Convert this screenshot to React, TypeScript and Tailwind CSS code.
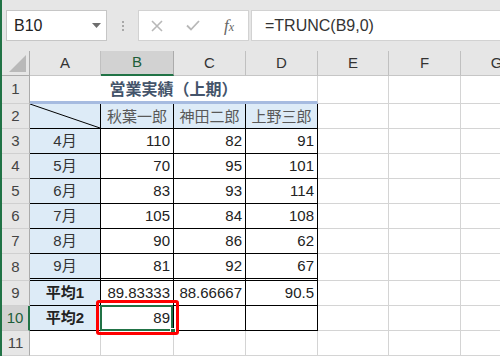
import React from "react";

const W = ["w-[71px]", "w-[73px]", "w-[72px]", "w-[72px]", "w-[71px]", "w-[72px]", "w-[72px]"];
const LETTERS = ["A", "B", "C", "D", "E", "F", "G"];

const FONT = "font-['Liberation_Sans','Noto_Sans_CJK_JP',sans-serif]";

function RowHdr({ n, sel }: { n: number; sel?: boolean }) {
  return (
    <div
      className={
        sel
          ? "w-[28px] shrink-0 flex items-center justify-center bg-[#d2d2d2] border-b border-b-[#c8c8c8] border-r-2 border-r-[#217346] text-[#1d5e3a] text-[15px]"
          : "w-[28px] shrink-0 flex items-center justify-center bg-[#e6e6e6] border-b border-b-[#d0d0d0] border-r border-r-[#ababab] text-[#444] text-[15px]"
      }
    >
      {n}
    </div>
  );
}

function GridCells({ from }: { from: number }) {
  return (
    <>
      {W.slice(from).map((w, i) => (
        <div key={i} className={`${w} shrink-0 border-r border-b border-[#d4d4d4]`} />
      ))}
    </>
  );
}

const data = [
  ["4月", "110", "82", "91"],
  ["5月", "70", "95", "101"],
  ["6月", "83", "93", "114"],
  ["7月", "105", "84", "108"],
  ["8月", "90", "86", "62"],
  ["9月", "81", "92", "67"],
];

export default function App() {
  return (
    <div className={`w-[500px] h-[356px] overflow-hidden bg-white border-l-2 border-[#217346] ${FONT}`}>
      {/* toolbar */}
      <div className="h-[51px] bg-[#e6e6e6] flex items-start pt-[10px]">
        <div className="ml-[4px] w-[101px] h-[31px] bg-white border border-[#c6c6c6] flex items-center justify-between pl-[7px] pr-[5px]">
          <span className="text-[16px] text-[#222]">B10</span>
          <svg width="9" height="6" viewBox="0 0 9 6">
            <path d="M0 0 L9 0 L4.5 5 Z" fill="#6e6e6e" />
          </svg>
        </div>
        <div className="w-[31px] h-[31px] flex flex-col items-center justify-center gap-[2px]">
          <div className="w-[2px] h-[2px] bg-[#a8a8a8]" />
          <div className="w-[2px] h-[2px] bg-[#a8a8a8]" />
          <div className="w-[2px] h-[2px] bg-[#a8a8a8]" />
        </div>
        <div className="w-[111px] h-[31px] bg-white border border-[#d2d2d2] flex items-center">
          <span className="w-[36px] flex justify-center">
            <svg width="12" height="12" viewBox="0 0 12 12">
              <path d="M1 1 L11 11 M11 1 L1 11" stroke="#b8b8b8" strokeWidth="1.6" />
            </svg>
          </span>
          <span className="w-[36px] flex justify-center">
            <svg width="14" height="11" viewBox="0 0 14 11">
              <path d="M1 5.5 L5 9.5 L13 1" stroke="#b8b8b8" strokeWidth="1.8" fill="none" />
            </svg>
          </span>
          <span className="w-[36px] flex justify-center items-baseline text-[#666] italic font-['Liberation_Serif',serif]">
            <span className="text-[17px]">f</span>
            <span className="text-[12px]">x</span>
          </span>
        </div>
        <div className="ml-[2px] flex-1 h-[31px] bg-white border border-r-0 border-[#d2d2d2] flex items-center pl-[13px]">
          <span className="text-[16px] text-[#333]">=TRUNC(B9,0)</span>
        </div>
      </div>

      {/* column header */}
      <div className="flex h-[25px] bg-[#e6e6e6]">
        <div className="w-[28px] shrink-0 border-r border-b border-[#ababab] flex items-end justify-end pr-[3px] pb-[3px]">
          <svg width="17" height="17" viewBox="0 0 17 17">
            <path d="M17 0 L17 17 L0 17 Z" fill="#b9b9b9" />
          </svg>
        </div>
        {LETTERS.map((l, i) => (
          <div
            key={l}
            className={
              i === 1
                ? `${W[i]} shrink-0 flex items-center justify-center bg-[#d2d2d2] border-r border-r-[#ababab] border-b-2 border-b-[#217346] text-[#1d5e3a] text-[15px]`
                : `${W[i]} shrink-0 flex items-center justify-center border-r border-r-[#c0c0c0] border-b border-b-[#c6c6c6] text-[#333] text-[15px]`
            }
          >
            {l}
          </div>
        ))}
      </div>

      {/* row 1 */}
      <div className="flex h-[28px]">
        <RowHdr n={1} />
        <div className="w-[288px] shrink-0 border-b-[3px] border-b-[#a6bbe0] border-r border-r-[#d4d4d4] flex items-center justify-center pb-[2px] text-[16px] font-bold text-[#44546a] font-['Noto_Sans_CJK_JP',sans-serif]">
          営業実績（上期）
        </div>
        <GridCells from={4} />
      </div>

      {/* row 2 */}
      <div className="flex h-[25px]">
        <RowHdr n={2} />
        <div className={`${W[0]} shrink-0 relative bg-[#ddebf7] border-r border-b border-black`}>
          <svg className="absolute inset-0" width="70" height="24" viewBox="0 0 70 24">
            <line x1="0" y1="0" x2="70" y2="24" stroke="#000" strokeWidth="1" />
          </svg>
        </div>
        {["秋葉一郎", "神田二郎", "上野三郎"].map((n, i) => (
          <div
            key={n}
            className={`${W[i + 1]} shrink-0 bg-[#ddebf7] border-r border-b border-black flex items-center justify-center text-[15px] text-[#595959] font-['Noto_Sans_CJK_JP',sans-serif]`}
          >
            {n}
          </div>
        ))}
        <GridCells from={4} />
      </div>

      {/* rows 3-8 */}
      {data.map((r, ri) => {
        const last = ri === data.length - 1;
        const bcls = last ? "border-r border-b-[3px] border-double border-black" : "border-r border-b border-black";
        return (
          <div key={ri} className={last ? "flex h-[27px]" : "flex h-[25px]"}>
            <RowHdr n={ri + 3} />
            <div className={`${W[0]} shrink-0 bg-[#ddebf7] ${bcls} flex items-center justify-center text-[15px] text-[#333]`}>
              {r[0]}
            </div>
            {r.slice(1).map((v, ci) => (
              <div
                key={ci}
                className={`${W[ci + 1]} shrink-0 ${bcls} flex items-center justify-end pr-[3px] text-[15px] text-[#222]`}
              >
                {v}
              </div>
            ))}
            <GridCells from={4} />
          </div>
        );
      })}

      {/* row 9 */}
      <div className="flex h-[25px]">
        <RowHdr n={9} />
        <div className={`${W[0]} shrink-0 bg-[#ddebf7] border-r border-b border-black flex items-center justify-center text-[15px] font-bold text-[#222]`}>
          平均1
        </div>
        {["89.83333", "88.66667", "90.5"].map((v, ci) => (
          <div
            key={ci}
            className={`${W[ci + 1]} shrink-0 border-r border-b border-black flex items-center justify-end pr-[3px] text-[15px] text-[#222]`}
          >
            {v}
          </div>
        ))}
        <GridCells from={4} />
      </div>

      {/* row 10 */}
      <div className="flex h-[25px]">
        <RowHdr n={10} sel />
        <div className={`${W[0]} shrink-0 bg-[#ddebf7] border-r border-b border-black flex items-center justify-center text-[15px] font-bold text-[#222]`}>
          平均2
        </div>
        <div className={`${W[1]} shrink-0 relative border-r border-b border-black flex items-center justify-end pr-[3px] text-[15px] text-[#222]`}>
          89
          <div className="absolute -left-[1px] -top-[1px] right-0 -bottom-[1px] border-2 border-[#217346]" />
          <div className="absolute -right-[3px] -bottom-[4px] w-[6px] h-[6px] bg-[#217346] border border-white" />
          <div className="absolute -left-[5px] -top-[6px] -right-[6px] -bottom-[5px] border-[3px] border-[#ff0000] rounded-[3px] z-10" />
        </div>
        <div className={`${W[2]} shrink-0 border-r border-b border-black`} />
        <div className={`${W[3]} shrink-0 border-r border-b border-black`} />
        <GridCells from={4} />
      </div>

      {/* row 11 */}
      <div className="flex h-[25px]">
        <RowHdr n={11} />
        <GridCells from={0} />
      </div>
    </div>
  );
}
